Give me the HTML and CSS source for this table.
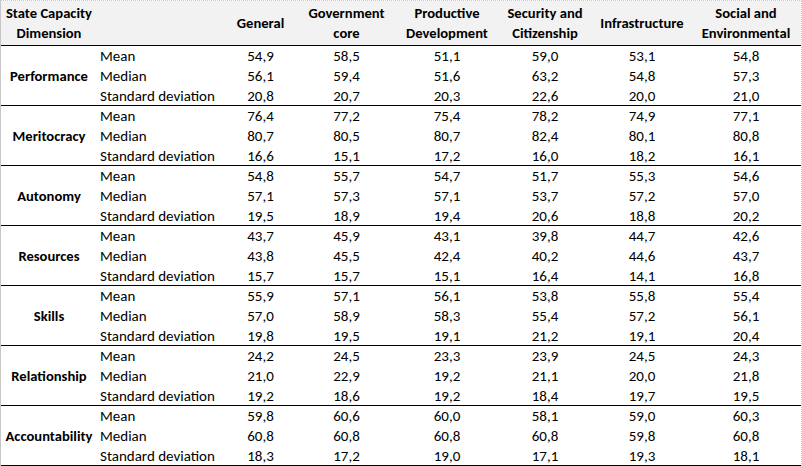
FILE: index.html
```html
<!DOCTYPE html>
<html lang="en">
<head>
<meta charset="utf-8">
<title>State Capacity Dimensions</title>
<link rel="stylesheet" href="styles.css">
</head>
<body>
<div class="sheet">
  <div class="row head">
    <div class="hcell">State Capacity<br>Dimension</div>
    <div class="hcell"></div>
    <div class="hcell">General</div>
    <div class="hcell">Government<br>core</div>
    <div class="hcell">Productive<br>Development</div>
    <div class="hcell">Security and<br>Citizenship</div>
    <div class="hcell">Infrastructure</div>
    <div class="hcell">Social and<br>Environmental</div>
  </div>

  <div class="row group">
    <div class="dim">Performance</div>
    <div class="stat">Mean</div><div class="num">54,9</div><div class="num">58,5</div><div class="num">51,1</div><div class="num">59,0</div><div class="num">53,1</div><div class="num">54,8</div>
    <div class="stat">Median</div><div class="num">56,1</div><div class="num">59,4</div><div class="num">51,6</div><div class="num">63,2</div><div class="num">54,8</div><div class="num">57,3</div>
    <div class="stat">Standard deviation</div><div class="num">20,8</div><div class="num">20,7</div><div class="num">20,3</div><div class="num">22,6</div><div class="num">20,0</div><div class="num">21,0</div>
  </div>

  <div class="row group">
    <div class="dim">Meritocracy</div>
    <div class="stat">Mean</div><div class="num">76,4</div><div class="num">77,2</div><div class="num">75,4</div><div class="num">78,2</div><div class="num">74,9</div><div class="num">77,1</div>
    <div class="stat">Median</div><div class="num">80,7</div><div class="num">80,5</div><div class="num">80,7</div><div class="num">82,4</div><div class="num">80,1</div><div class="num">80,8</div>
    <div class="stat">Standard deviation</div><div class="num">16,6</div><div class="num">15,1</div><div class="num">17,2</div><div class="num">16,0</div><div class="num">18,2</div><div class="num">16,1</div>
  </div>

  <div class="row group">
    <div class="dim">Autonomy</div>
    <div class="stat">Mean</div><div class="num">54,8</div><div class="num">55,7</div><div class="num">54,7</div><div class="num">51,7</div><div class="num">55,3</div><div class="num">54,6</div>
    <div class="stat">Median</div><div class="num">57,1</div><div class="num">57,3</div><div class="num">57,1</div><div class="num">53,7</div><div class="num">57,2</div><div class="num">57,0</div>
    <div class="stat">Standard deviation</div><div class="num">19,5</div><div class="num">18,9</div><div class="num">19,4</div><div class="num">20,6</div><div class="num">18,8</div><div class="num">20,2</div>
  </div>

  <div class="row group">
    <div class="dim">Resources</div>
    <div class="stat">Mean</div><div class="num">43,7</div><div class="num">45,9</div><div class="num">43,1</div><div class="num">39,8</div><div class="num">44,7</div><div class="num">42,6</div>
    <div class="stat">Median</div><div class="num">43,8</div><div class="num">45,5</div><div class="num">42,4</div><div class="num">40,2</div><div class="num">44,6</div><div class="num">43,7</div>
    <div class="stat">Standard deviation</div><div class="num">15,7</div><div class="num">15,7</div><div class="num">15,1</div><div class="num">16,4</div><div class="num">14,1</div><div class="num">16,8</div>
  </div>

  <div class="row group">
    <div class="dim">Skills</div>
    <div class="stat">Mean</div><div class="num">55,9</div><div class="num">57,1</div><div class="num">56,1</div><div class="num">53,8</div><div class="num">55,8</div><div class="num">55,4</div>
    <div class="stat">Median</div><div class="num">57,0</div><div class="num">58,9</div><div class="num">58,3</div><div class="num">55,4</div><div class="num">57,2</div><div class="num">56,1</div>
    <div class="stat">Standard deviation</div><div class="num">19,8</div><div class="num">19,5</div><div class="num">19,1</div><div class="num">21,2</div><div class="num">19,1</div><div class="num">20,4</div>
  </div>

  <div class="row group">
    <div class="dim">Relationship</div>
    <div class="stat">Mean</div><div class="num">24,2</div><div class="num">24,5</div><div class="num">23,3</div><div class="num">23,9</div><div class="num">24,5</div><div class="num">24,3</div>
    <div class="stat">Median</div><div class="num">21,0</div><div class="num">22,9</div><div class="num">19,2</div><div class="num">21,1</div><div class="num">20,0</div><div class="num">21,8</div>
    <div class="stat">Standard deviation</div><div class="num">19,2</div><div class="num">18,6</div><div class="num">19,2</div><div class="num">18,4</div><div class="num">19,7</div><div class="num">19,5</div>
  </div>

  <div class="row group">
    <div class="dim">Accountability</div>
    <div class="stat">Mean</div><div class="num">59,8</div><div class="num">60,6</div><div class="num">60,0</div><div class="num">58,1</div><div class="num">59,0</div><div class="num">60,3</div>
    <div class="stat">Median</div><div class="num">60,8</div><div class="num">60,8</div><div class="num">60,8</div><div class="num">60,8</div><div class="num">59,8</div><div class="num">60,8</div>
    <div class="stat">Standard deviation</div><div class="num">18,3</div><div class="num">17,2</div><div class="num">19,0</div><div class="num">17,1</div><div class="num">19,3</div><div class="num">18,1</div>
  </div>
</div>
</body>
</html>
```

FILE: styles.css
```css
html, body {
  margin: 0;
  padding: 0;
  background: #ffffff;
}

.sheet {
  width: 802px;
  box-sizing: border-box;
  border-top: 1px dotted #c8c8c8;
  border-left: 1px solid #c6c6c6;
  border-right: 1px dotted #c8c8c8;
  font-family: "Carlito", "Lato", "Liberation Sans", sans-serif;
  font-size: 15px;
  color: #000000;
}

.row {
  display: grid;
  grid-template-columns: 96px 128px 71px 101px 100px 96px 98px 110px;
  border-bottom: 1px solid #000000;
  line-height: 20px;
}

.head {
  height: 44px;
  background: #f2f2f2;
  font-weight: bold;
  font-size: 14.6px;
}

.hcell {
  display: flex;
  align-items: center;
  justify-content: center;
  text-align: center;
  white-space: nowrap;
}

.group {
  grid-template-rows: 20px 20px 19px;
}

.dim {
  grid-row: 1 / 4;
  align-self: center;
  text-align: center;
  font-weight: bold;
  font-size: 14.6px;
  white-space: nowrap;
}

.stat {
  padding-left: 3px;
  white-space: nowrap;
}

.num {
  text-align: center;
}
```
